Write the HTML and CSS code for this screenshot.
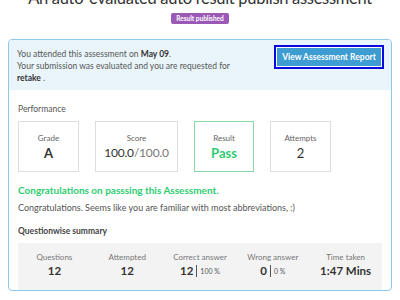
FILE: index.html
```html
<!DOCTYPE html>
<html>
<head>
<meta charset="utf-8">
<link rel="stylesheet" href="styles.css">
</head>
<body>
<div class="page">
  <h1 class="title">An auto-evaluated auto result publish assessment</h1>
  <div class="badge-row"><span class="badge">Result published</span></div>
  <div class="card">
    <div class="card-head">
      <div class="head-text">
        <div>You attended this assessment on <b>May 09</b>.</div>
        <div>Your submission was evaluated and you are requested for</div>
        <div><b>retake</b> .</div>
      </div>
      <button class="report-btn">View Assessment Report</button>
    </div>
    <div class="card-body">
      <div class="section-label">Performance</div>
      <div class="stats">
        <div class="stat">
          <div class="stat-label">Grade</div>
          <div class="stat-value strong">A</div>
        </div>
        <div class="stat">
          <div class="stat-label">Score</div>
          <div class="stat-value tight">100.0<span class="muted">/100.0</span></div>
        </div>
        <div class="stat pass">
          <div class="stat-label">Result</div>
          <div class="stat-value green">Pass</div>
        </div>
        <div class="stat">
          <div class="stat-label">Attempts</div>
          <div class="stat-value">2</div>
        </div>
      </div>
      <div class="congrats">Congratulations on passsing this Assessment.</div>
      <p class="message">Congratulations. Seems like you are familiar with most abbreviations, :)</p>
      <div class="section-label bold">Questionwise summary</div>
      <div class="summary">
        <div class="sum-col">
          <div class="sum-label">Questions</div>
          <div class="sum-value">12</div>
        </div>
        <div class="sum-col">
          <div class="sum-label">Attempted</div>
          <div class="sum-value">12</div>
        </div>
        <div class="sum-col">
          <div class="sum-label">Correct answer</div>
          <div class="sum-value">12<span class="sep"></span><span class="pct">100 %</span></div>
        </div>
        <div class="sum-col">
          <div class="sum-label">Wrong answer</div>
          <div class="sum-value">0<span class="sep"></span><span class="pct">0 %</span></div>
        </div>
        <div class="sum-col">
          <div class="sum-label">Time taken</div>
          <div class="sum-value">1:47 Mins</div>
        </div>
      </div>
    </div>
  </div>
</div>
</body>
</html>
```

FILE: styles.css
```css
* { box-sizing: border-box; }
html, body { margin: 0; padding: 0; background: #fff; }
body {
  font-family: Lato, "Open Sans", "DejaVu Sans", sans-serif;
  color: #333;
  overflow: hidden;
}
.page { padding: 0 8px; }
.title {
  margin: -13px 0 0;
  font-size: 16.5px;
  letter-spacing: -0.3px;
  line-height: 23px;
  font-weight: 400;
  text-align: center;
  color: #333;
  white-space: nowrap;
}
.badge-row {
  display: flex;
  justify-content: center;
  margin-top: 3px;
}
.badge {
  display: inline-block;
  height: 11px;
  line-height: 11px;
  padding: 0 5px;
  font-size: 6.5px;
  font-weight: 700;
  color: #fff;
  background: #9b59b6;
  border-radius: 2px;
}
.card {
  margin-top: 15px;
  border: 1px solid #8ec9e9;
  border-radius: 4px;
  overflow: hidden;
}
.card-head {
  display: flex;
  justify-content: space-between;
  align-items: flex-start;
  background: #eaf5fb;
  padding: 5px 7px 6px 8px;
  font-size: 8.5px;
  line-height: 12px;
  color: #555;
}
.head-text { padding-top: 3px; }
.head-text b { color: #333; font-weight: 700; }
.report-btn {
  width: 110px;
  height: 24px;
  border: 2px solid #0a0ae0;
  box-shadow: inset 0 0 0 1px #fff;
  background: #3d9cd2;
  color: #fff;
  font-family: inherit;
  font-size: 8.5px;
  font-weight: 700;
  padding: 0;
  cursor: pointer;
}
.card-body { padding: 14px 9px 0; }
.section-label {
  font-size: 8.5px;
  line-height: 11px;
  color: #555;
}
.section-label.bold { font-weight: 700; color: #444; }
.stats {
  display: grid;
  grid-template-columns: 61px 83px 60px 61px;
  column-gap: 16px;
  margin-top: 6px;
}
.stat {
  height: 51px;
  border: 1px solid #dedede;
  display: flex;
  flex-direction: column;
  align-items: center;
  padding-top: 11px;
}
.stat.pass { border-color: #86dba6; }
.stat-label {
  font-size: 8px;
  line-height: 11px;
  color: #666;
}
.stat-value {
  font-size: 13px;
  line-height: 18px;
  color: #333;
}
.stat-value.tight { font-size: 12px; letter-spacing: -0.2px; }
.stat-value.strong { font-weight: 700; }
.stat-value.green { color: #2ecc71; font-weight: 700; }
.muted { color: #777; }
.congrats {
  margin-top: 11px;
  font-size: 10px;
  line-height: 14px;
  font-weight: 700;
  color: #2ecc71;
}
.message {
  margin: 4px 0 0;
  font-size: 9px;
  line-height: 13px;
  color: #555;
}
.card-body .section-label.bold { margin-top: 12px; }
.summary {
  margin-top: 6px;
  height: 47px;
  background: #f3f3f3;
  display: grid;
  grid-template-columns: repeat(5, 1fr);
  padding-top: 9px;
}
.sum-col {
  display: flex;
  flex-direction: column;
  align-items: center;
}
.sum-label {
  font-size: 8px;
  line-height: 11px;
  color: #777;
}
.sum-value {
  display: flex;
  align-items: center;
  font-size: 11.5px;
  line-height: 16px;
  font-weight: 700;
  color: #333;
}
.sep {
  display: inline-block;
  width: 1px;
  height: 12px;
  background: #555;
  margin: 0 3px;
}
.pct {
  font-size: 7px;
  font-weight: 400;
  color: #555;
}
```
